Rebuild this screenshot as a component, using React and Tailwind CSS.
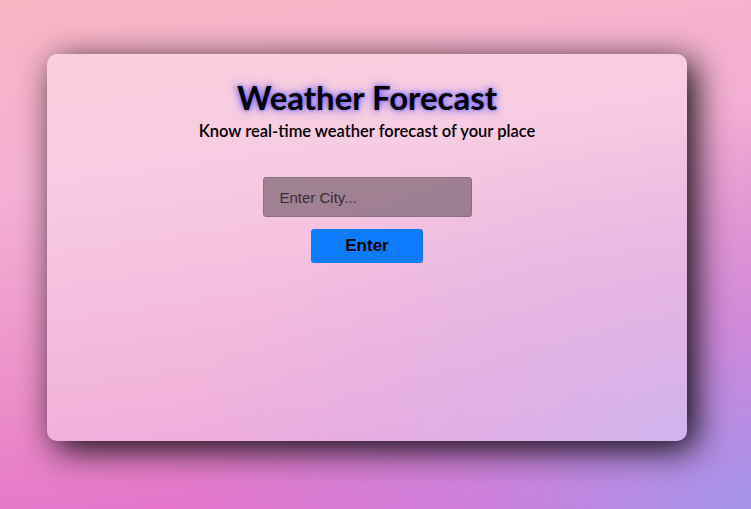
import React from "react";

export default function App() {
  return (
    <div className="w-[751px] h-[509px] overflow-hidden pl-[47px] pt-[54px] bg-[radial-gradient(ellipse_at_100%_100%,rgba(165,150,235,1)_0%,rgba(190,140,230,0.6)_25%,rgba(220,110,210,0)_55%),linear-gradient(172deg,#f9b6c4_0%,#f3b0d4_32%,#ec8ec8_65%,#e066cc_100%)]">
      <div className="w-[640px] h-[387px] rounded-[10px] bg-white/35 shadow-[8px_8px_34px_rgba(0,0,0,0.95)] flex flex-col items-center pt-[23px] font-['Lato','Noto_Sans',sans-serif]">
        <h1 className="text-[33px] leading-[40px] font-bold text-black [text-shadow:0_0_8px_rgba(70,60,255,0.9),0_0_3px_rgba(90,80,255,0.7)]">
          Weather Forecast
        </h1>
        <p className="mt-[4px] text-[16.5px] leading-[20px] font-semibold text-black">
          Know real-time weather forecast of your place
        </p>
        <input
          type="text"
          placeholder="Enter City..."
          className="mt-[36px] w-[209px] h-[40px] rounded-[3px] border border-[#8a7080] bg-black/35 px-4 text-[15px] text-black placeholder:text-[#3b2a38] outline-none font-['Liberation_Sans',Arial,sans-serif]"
        />
        <button className="mt-[12px] w-[112px] h-[34px] rounded-[3px] bg-[#0d7bfd] text-black font-bold text-[17px] font-['Liberation_Sans',Arial,sans-serif]">
          Enter
        </button>
      </div>
    </div>
  );
}
